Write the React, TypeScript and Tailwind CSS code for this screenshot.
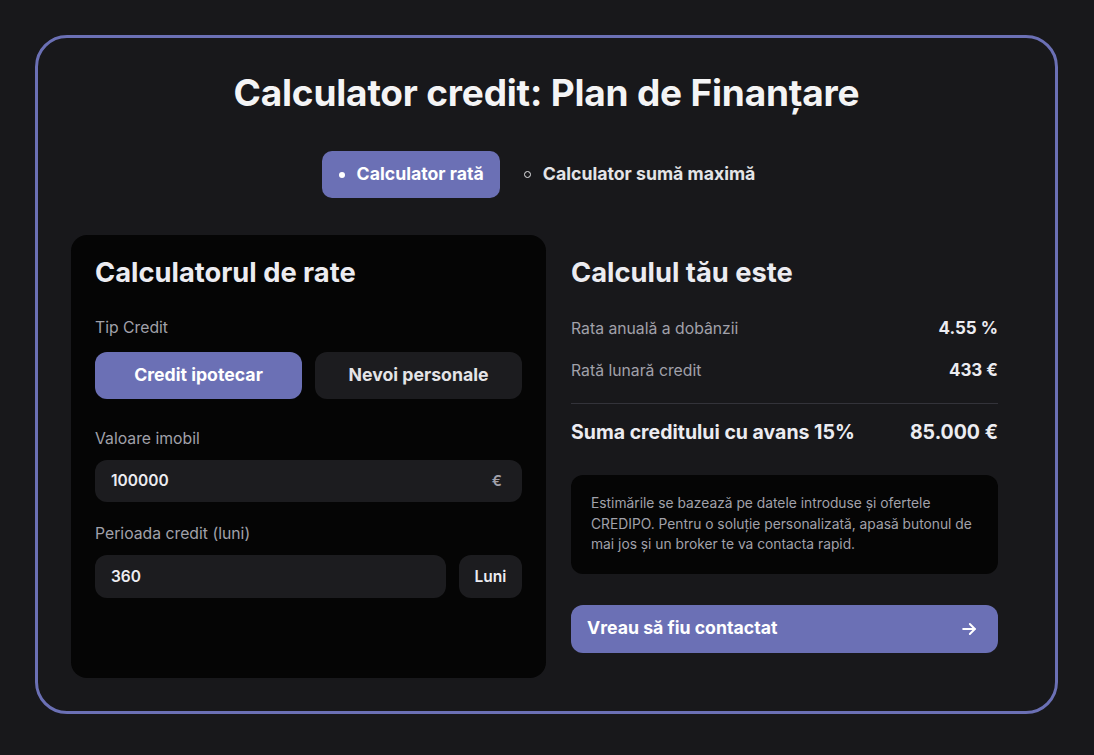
import React from 'react';

const font = { fontFamily: 'Inter, "Noto Sans", sans-serif' };

const ArrowRight: React.FC = () => (
  <svg width="20" height="20" viewBox="0 0 24 24" fill="none" stroke="currentColor" strokeWidth="2.3" strokeLinecap="round" strokeLinejoin="round">
    <path d="M5 12h14" />
    <path d="M13 6l6 6-6 6" />
  </svg>
);

const ResultRow: React.FC<{ label: string; value: string }> = ({ label, value }) => (
  <div className="flex items-center justify-between h-[42px]">
    <span className="text-[15.75px] text-[#a1a1aa]">{label}</span>
    <span className="text-[17px] font-bold text-[#ececf1]">{value}</span>
  </div>
);

export default function App() {
  return (
    <div className="min-h-[755px] bg-[#18181b] pt-[35px] pl-[35px] pr-[36px] pb-[41px]" style={font}>
      <div className="border-[3px] border-[#6b70b5] rounded-[32px] bg-[#18181b] pt-[33px] pb-[33px] pl-[33px] pr-[57px]">
        <h1 className="text-[37px] leading-[44px] font-bold text-[#f4f4f5] text-center pl-[24px] tracking-[-0.2px]">
          Calculator credit: Plan de Finanțare
        </h1>

        <div className="flex justify-center items-center gap-[24px] mt-[36px] pl-[8px]">
          <button className="flex items-center gap-[12px] h-[47px] pl-[17px] pr-[16px] rounded-[10px] bg-[#6b70b5] text-white text-[17.7px] font-bold">
            <span className="w-[6px] h-[6px] rounded-full bg-white" />
            Calculator rată
          </button>
          <button className="flex items-center gap-[12px] h-[47px] text-[#e4e4e7] text-[17.7px] font-bold">
            <span className="w-[7px] h-[7px] rounded-full border-[1.5px] border-[#e4e4e7]" />
            Calculator sumă maximă
          </button>
        </div>

        <div className="grid grid-cols-[475px_427px] gap-[25px] mt-[37px]">
          <div className="bg-[#050505] rounded-[16px] px-[24px] pt-[22px] pb-[24px] h-[443px]">
            <h2 className="text-[27.3px] leading-[32px] font-bold text-[#ececf1]">Calculatorul de rate</h2>
            <div className="mt-[29px] text-[15.75px] leading-[20px] text-[#a1a1aa]">Tip Credit</div>
            <div className="grid grid-cols-2 gap-[13px] mt-[14px]">
              <button className="h-[47px] rounded-[12px] bg-[#6b70b5] text-white text-[17.7px] font-bold">Credit ipotecar</button>
              <button className="h-[47px] rounded-[12px] bg-[#1c1c1f] text-[#e4e4e7] text-[17.7px] font-bold">Nevoi personale</button>
            </div>

            <div className="mt-[30px] text-[15.75px] leading-[20px] text-[#a1a1aa]">Valoare imobil</div>
            <div className="mt-[11px] h-[42px] rounded-[12px] bg-[#1c1c1f] flex items-center justify-between px-[16px]">
              <span className="text-[15.5px] font-semibold text-[#ececf1]">100000</span>
              <span className="text-[15px] font-semibold text-[#a1a1aa] pr-[4px]">€</span>
            </div>

            <div className="mt-[22px] text-[15.75px] leading-[20px] text-[#a1a1aa]">Perioada credit (luni)</div>
            <div className="mt-[11px] flex gap-[13px]">
              <div className="flex-1 h-[43px] rounded-[12px] bg-[#1c1c1f] flex items-center px-[16px]">
                <span className="text-[15.5px] font-semibold text-[#ececf1]">360</span>
              </div>
              <div className="w-[63px] h-[43px] rounded-[12px] bg-[#1c1c1f] flex items-center justify-center text-[15.5px] font-semibold text-[#ececf1]">
                Luni
              </div>
            </div>
          </div>

          <div className="pt-[22px]">
            <h2 className="text-[27.3px] leading-[32px] font-bold text-[#ececf1]">Calculul tău este</h2>
            <div className="mt-[19px]">
              <ResultRow label="Rata anuală a dobânzii" value="4.55 %" />
              <ResultRow label="Rată lunară credit" value="433 €" />
            </div>
            <div className="mt-[11px] border-t border-[#33333a]" />
            <div className="flex items-center justify-between h-[58px]">
              <span className="text-[19.5px] font-bold text-[#ececf1]">Suma creditului cu avans 15%</span>
              <span className="text-[19.5px] font-bold text-[#ececf1]">85.000 €</span>
            </div>

            <div className="mt-[13px] bg-[#050505] rounded-[12px] px-[20px] pt-[18px] pb-[19px] text-[13.8px] leading-[20.5px] text-[#a1a1aa] whitespace-nowrap">
              Estimările se bazează pe datele introduse și ofertele
              <br />
              CREDIPO. Pentru o soluție personalizată, apasă butonul de
              <br />
              mai jos și un broker te va contacta rapid.
            </div>

            <button className="mt-[31px] w-full h-[48px] rounded-[12px] bg-[#6b70b5] text-white flex items-center justify-between pl-[16px] pr-[19px]">
              <span className="text-[17.7px] font-bold">Vreau să fiu contactat</span>
              <ArrowRight />
            </button>
          </div>
        </div>
      </div>
    </div>
  );
}
